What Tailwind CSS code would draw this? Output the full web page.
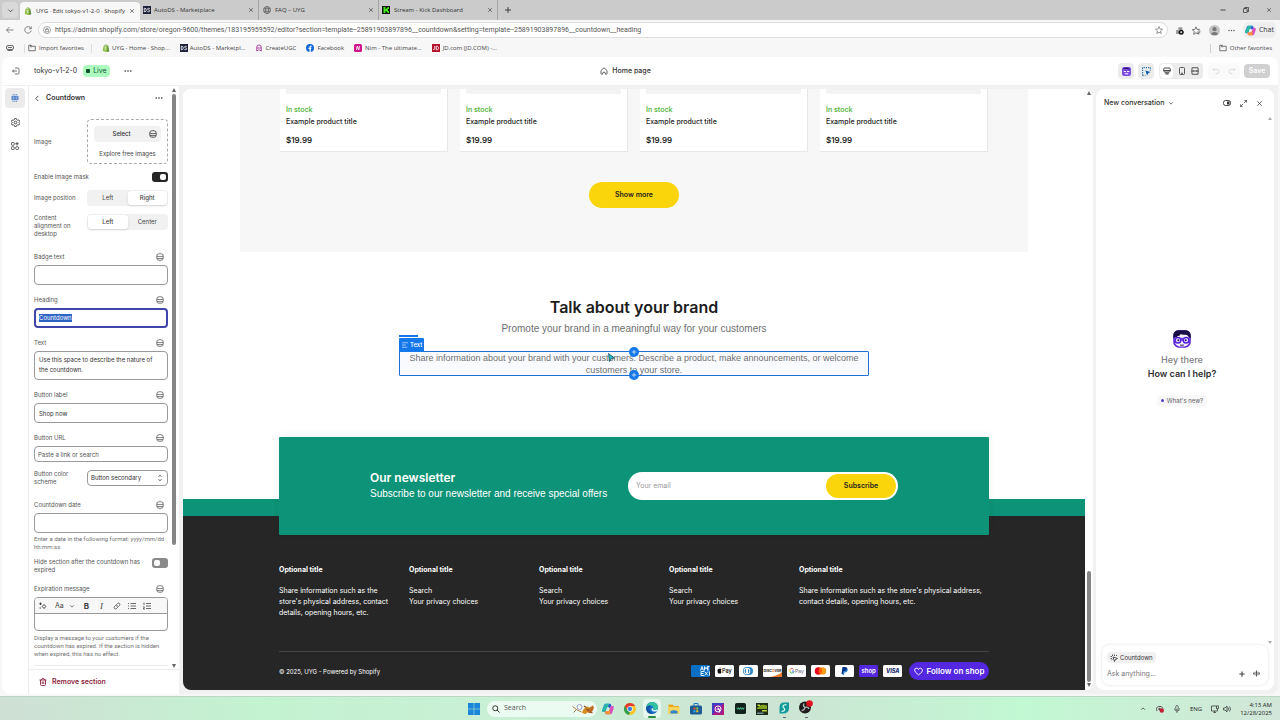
<!DOCTYPE html>
<html lang="en">
<head>
<meta charset="utf-8">
<meta name="viewport" content="width=device-width, initial-scale=1">
<title>UYG · Edit tokyo-v1-2-0 · Shopify</title>
<script src="https://cdn.jsdelivr.net/npm/@tailwindcss/browser@4"></script>
</head>
<body class="flex h-screen flex-col overflow-hidden bg-[#f7f7f7] font-['Inter',sans-serif] text-[#303030]">
<svg class="hidden" aria-hidden="true">
  <symbol id="x" viewBox="0 0 16 16"><path d="M3 3l10 10M13 3L3 13" fill="none" stroke="currentColor" stroke-width="1.6"/></symbol>
  <symbol id="down" viewBox="0 0 16 16"><path d="M3 6l5 5 5-5" fill="none" stroke="currentColor" stroke-width="1.8"/></symbol>
  <symbol id="dots" viewBox="0 0 16 16"><g fill="currentColor"><circle cx="2.5" cy="8" r="1.6"/><circle cx="8" cy="8" r="1.6"/><circle cx="13.5" cy="8" r="1.6"/></g></symbol>
  <symbol id="plus" viewBox="0 0 16 16"><path d="M8 2v12M2 8h12" fill="none" stroke="currentColor" stroke-width="1.8"/></symbol>
  <symbol id="db" viewBox="0 0 16 16"><g fill="none" stroke="currentColor" stroke-width="1.5"><rect x="1.500" y="1.500" width="13" height="13" rx="4.500"/><path d="M2 6.500q6 2 12 0M2 10.500q6 2 12 0"/></g></symbol>
  <symbol id="folder" viewBox="0 0 16 16"><path d="M1.5 13.5v-11h5l1.500 2h6.500v9zM5 2.500v3h3" fill="none" stroke="currentColor" stroke-width="1.4"/></symbol>
  <symbol id="bag" viewBox="0 0 16 16"><path d="M3 4l8-1.500 2.500 12-5 1.500L1.500 14z" fill="#8fbf45"/><path d="M11 2.500l1.500 1 2 11-4 1.500z" fill="#5a8a36"/><path d="M5.500 4.500c0-5 4-5 4-1" fill="none" stroke="#6d9d3c" stroke-width="1.200"/><path d="M9 6.500c-4-1.500-4 1.500-2 2.500s1.500 3-1.500 1.500" fill="none" stroke="#fff" stroke-width="1.400"/></symbol>
  <symbol id="ds" viewBox="0 0 16 16"><rect width="16" height="16" fill="#1c2038"/><path d="M2.500 4.500v7h1.500c3.500 0 3.500-7 0-7zM13.500 5c-3-1-5 0-4.500 1.500s4.500 1 4.500 3-3 2.500-5 1.500" fill="none" stroke="#fff" stroke-width="1.600"/></symbol>
  <symbol id="copilot" viewBox="0 0 16 16"><path d="M5 1h5c2 0 2 2 2.500 4H8C6.500 5 6 7 5.500 9L4.500 12H2C0 12 0 10 .8 7.500L2.500 3C3 1.500 4 1 5 1z" fill="#2a8fe6"/><path d="M5 1h5L8 5C6.500 5 6 7 5 10L2 12C0 12 0 10 .8 7.500z" fill="#27b8a0"/><path d="M11 15H6c-2 0-2-2-2.500-4H8c1.500 0 2-2 2.500-4l1-3H14c2 0 2 2 1.200 4.500L13.500 13c-.5 1.500-1.500 2-2.500 2z" fill="#d94fc0"/><path d="M11 15H6c-2 0-2-2-2.500-4H8c1.500 0 2-2 2.500-4z" fill="#f79436"/><path d="M10 1c2 0 2 2 2.500 3l-1 0-1 3L8 5z" fill="#3158d4"/></symbol>
  <symbol id="face" viewBox="0 0 32 32"><rect x="2" y="2" width="28" height="28" rx="9" fill="#5b25dd"/><rect x="4.500" y="8" width="23" height="20" rx="8" fill="#f4f0ff"/><path d="M2 15V11Q2 2 11 2h10q9 0 9 9v4l-3-2q-1-4-4-4-7 1-9-1-2 4-5 3l-2 3-2-1z" fill="#170c45"/><path d="M3 14h26v5H3z" fill="#7c4cf0"/><circle cx="9.500" cy="18" r="4.500" fill="#efe9ff" stroke="#5520dc" stroke-width="2.500"/><circle cx="22.500" cy="18" r="4.500" fill="#efe9ff" stroke="#5520dc" stroke-width="2.500"/><circle cx="10" cy="18" r="1.500" fill="#241052"/><circle cx="22" cy="18" r="1.500" fill="#241052"/><path d="M13 25.500q3 1 6 0" fill="none" stroke="#241052" stroke-width="1.600"/></symbol>
</svg>

<!-- Browser tabs -->
<header class="flex h-5 shrink-0 items-stretch bg-[#cbcbcb] font-['Open_Sans',sans-serif] text-[6px] text-[#333]">
  <button class="m-[2px] mr-0 flex w-4 items-center justify-center rounded bg-[#d9d9d9]" aria-label="Tab actions"><svg class="size-[7px]"><use href="#down"/></svg></button>
  <nav class="ml-0.5 flex" aria-label="Tabs">
    <div class="mt-0.5 flex w-[120px] items-center gap-1 rounded-t bg-[#f7f7f7] pr-[5px] pl-1"><svg class="size-2 shrink-0"><use href="#bag"/></svg><span class="grow whitespace-nowrap">UYG · Edit tokyo-v1-2-0 · Shopify</span><button aria-label="Close tab"><svg class="size-[6px]"><use href="#x"/></svg></button></div>
    <div class="flex w-[119px] items-center gap-[3px] border-r border-[#a5a5a5] pr-1 pl-[3px]"><svg class="size-2 shrink-0"><use href="#ds"/></svg><span class="grow whitespace-nowrap">AutoDS - Marketplace</span><button aria-label="Close tab"><svg class="size-[6px]"><use href="#x"/></svg></button></div>
    <div class="flex w-[120px] items-center gap-1 border-r border-[#a5a5a5] pr-1 pl-1"><svg class="size-2 shrink-0" viewBox="0 0 16 16" fill="none" stroke="#444" stroke-width="1.200"><circle cx="8" cy="8" r="7"/><ellipse cx="8" cy="8" rx="3" ry="7"/><path d="M1.500 5.500h13M1.500 10.500h13"/></svg><span class="grow whitespace-nowrap">FAQ – UYG</span><button aria-label="Close tab"><svg class="size-[6px]"><use href="#x"/></svg></button></div>
    <div class="flex w-[119px] items-center gap-1 border-r border-[#a5a5a5] pr-1 pl-[3px]"><svg class="size-2 shrink-0" viewBox="0 0 16 16"><rect width="16" height="16" fill="#111"/><path d="M3 2h4v4h2V4h2V2h3v4h-2v4h2v4h-3v-2H9v-2H7v4H3z" fill="#3fe719"/></svg><span class="grow whitespace-nowrap">Stream - Kick Dashboard</span><button aria-label="Close tab"><svg class="size-[6px]"><use href="#x"/></svg></button></div>
  </nav>
  <button class="ml-1.5 self-center" aria-label="New tab"><svg class="size-2"><use href="#plus"/></svg></button>
  <div class="ml-auto flex items-center gap-[17px] pr-2">
    <button aria-label="Minimize"><svg class="size-[6px]" viewBox="0 0 16 16"><path d="M1 8h14" stroke="#222" stroke-width="2"/></svg></button>
    <button aria-label="Restore"><svg class="size-[6px]" viewBox="0 0 16 16" fill="none" stroke="#222" stroke-width="2"><rect x="1" y="4" width="10" height="11" rx="2"/><path d="M5 4V1h8q2 0 2 2v9h-4"/></svg></button>
    <button aria-label="Close window"><svg class="size-[6px]"><use href="#x"/></svg></button>
  </div>
</header>

<!-- Address bar -->
<div class="flex h-5 shrink-0 items-center pr-1 pl-1.5 font-['Open_Sans',sans-serif] text-[#555]">
  <button aria-label="Back"><svg class="size-2" viewBox="0 0 16 16" fill="none" stroke="#555" stroke-width="1.400"><path d="M15 8H1M7 2L1 8l6 6"/></svg></button>
  <button class="ml-[10px]" aria-label="Reload"><svg class="size-2" viewBox="0 0 16 16" fill="none" stroke="#555" stroke-width="1.400"><path d="M14 5A6.500 6.500 0 1 0 14.500 9M14.500 1v4.500H10"/></svg></button>
  <div class="ml-1.5 flex h-4 grow items-center rounded-full border border-[#dedede] bg-white px-1">
    <svg class="size-2 shrink-0" viewBox="0 0 16 16" fill="none" stroke="#666" stroke-width="1.200"><circle cx="8" cy="8" r="7"/><path d="M5 7h6v4.500H5zM6 7V5.500q2-3 4 0V7"/></svg>
    <input aria-label="Address" class="ml-1 min-w-0 grow bg-transparent font-['Roboto',sans-serif] text-[7px] outline-none" value="https://admin.shopify.com/store/oregon-9600/themes/183195959592/editor?section=template--25891903897896__countdown&amp;setting=template--25891903897896__countdown__heading">
    <svg class="size-2 shrink-0" viewBox="0 0 16 16" fill="none" stroke="#555" stroke-width="1.200"><path d="M8 1l2 5 5 .5-4 3.500 1.500 5L8 12.500 3.500 15 5 10 1 6.500 6 6z"/></svg>
  </div>
  <div class="ml-[7px] flex items-center gap-2">
    <button aria-label="Extension"><svg class="size-[9px]" viewBox="0 0 16 16"><path d="M6 2h7v5H6zM2 7h5v7H2z" fill="#999"/><circle cx="11" cy="11" r="4.500" fill="#111"/><path d="M11 9v4M9 11h4" stroke="#fff" stroke-width="1.300"/></svg></button>
    <button aria-label="Favorites"><svg class="size-[9px]" viewBox="0 0 16 16" fill="none" stroke="#444" stroke-width="1.300"><path d="M10 10l2 4.500-5-2.500-4 3 1-5-3.500-3.500 4.500-.5L7 1.500 9 6h5M11 9h4M11.500 12h3"/></svg></button>
    <button aria-label="Profile"><svg class="size-[11px]" viewBox="0 0 16 16"><circle cx="8" cy="8" r="8" fill="#c4c4c4"/><circle cx="8" cy="6" r="3" fill="#777"/><path d="M3 13c1-4 9-4 10 0-2 2-8 2-10 0z" fill="#777"/></svg></button>
    <button aria-label="Settings and more"><svg class="size-[7px]"><use href="#dots"/></svg></button>
    <button class="flex h-4 items-center gap-[3px] rounded-md bg-[#eee] px-0.5 text-[7px] text-[#333]"><svg class="size-[11px]"><use href="#copilot"/></svg>Chat</button>
  </div>
</div>

<!-- Favorites bar -->
<nav class="flex h-[17px] shrink-0 items-center gap-[10px] px-1.5 pb-px font-['Open_Sans',sans-serif] text-[6px] text-[#444]" aria-label="Favorites">
  <button aria-label="Workspaces"><svg class="size-2" viewBox="0 0 16 16" fill="none" stroke="#444" stroke-width="1.600"><rect x="1" y="3" width="14" height="8" rx="3"/><path d="M4 7h8M3 13h10"/></svg></button>
  <a href="#" class="flex items-center gap-[3px] border-x border-[#ddd] pr-[7px]"><svg class="ml-[3px] size-2"><use href="#folder"/></svg>Import favorites</a>
  <a href="#" class="flex items-center gap-[2px]"><svg class="size-2"><use href="#bag"/></svg>UYG - Home · Shop...</a>
  <a href="#" class="flex items-center gap-[2px]"><svg class="size-2"><use href="#ds"/></svg>AutoDS - Marketpl...</a>
  <a href="#" class="flex items-center gap-[2px]"><svg class="size-2" viewBox="0 0 16 16" fill="none" stroke="#a5359a" stroke-width="1.800"><path d="M3.500 14V6q0-4 4.500-4t4.500 4v8l-3-2h-3zM4 8h8"/></svg>CreateUGC</a>
  <a href="#" class="flex items-center gap-[3px]"><svg class="size-2" viewBox="0 0 16 16"><circle cx="8" cy="8" r="8" fill="#1668d8"/><path d="M7 16V10H5V7.500h2V6q0-3 4-2.500V6q-2-.5-2 1v.5h2L10.500 10H9.500v6z" fill="#fff"/></svg>Facebook</a>
  <a href="#" class="flex items-center gap-[3px]"><svg class="size-2" viewBox="0 0 16 16"><rect width="16" height="16" rx="3" fill="#d3138e"/><path d="M5 12l1.500-8 3 8L11 4" fill="none" stroke="#fff" stroke-width="1.800"/></svg>Nim - The ultimate...</a>
  <a href="#" class="flex items-center gap-[3px]"><svg class="size-2" viewBox="0 0 16 16"><rect width="16" height="16" fill="#b5122c"/><path d="M5.500 4v6q-1 2-3 1M8.500 4.500v7h1.500c4 0 4-7 0-7z" fill="none" stroke="#fff" stroke-width="1.700"/></svg>JD.com (JD.COM) -...</a>
  <a href="#" class="ml-auto flex items-center gap-[3px] border-l border-[#ccc] pl-2 pr-[2px]"><svg class="size-2"><use href="#folder"/></svg>Other favorites</a>
</nav>

<!-- Theme editor -->
<div class="mx-0.5 mb-0.5 flex min-h-0 grow flex-col overflow-hidden rounded-lg bg-[#f1f1f1]">
  <div class="grid h-7 shrink-0 grid-cols-[19fr_auto_20fr] items-center bg-white pr-2 pl-2.5 text-[7px]">
    <div class="flex items-center">
      <button aria-label="Exit"><svg class="size-2" viewBox="0 0 16 16" fill="none" stroke="#444" stroke-width="1.500"><path d="M6 2h5q3 0 3 3v6q0 3-3 3H6M10 8H1M4 5L1 8l3 3"/></svg></button>
      <span class="ml-[14px]">tokyo-v1-2-0</span>
      <span class="ml-1.5 flex h-3 items-center gap-[3px] rounded bg-[#aefbc0] px-[3px] text-[#0d542b]"><i class="size-1 rounded-[1px] bg-[#0d542b]"></i>Live</span>
      <button class="ml-[14px]" aria-label="More actions"><svg class="size-2"><use href="#dots"/></svg></button>
    </div>
    <button class="flex items-center gap-1 font-medium"><svg class="size-2" viewBox="0 0 16 16" fill="none" stroke="#333" stroke-width="1.500"><path d="M2 7l6-5.500L14 7v6q0 1.500-1.500 1.500H11Q11 10 8 10t-3 4.500H3.500Q2 14.500 2 13z"/></svg>Home page</button>
    <div class="flex items-center justify-end gap-1">
      <button class="flex size-4 items-center justify-center rounded bg-[#ececec]" aria-label="Sidekick"><svg class="size-[9px]" viewBox="0 0 16 16"><rect width="16" height="16" rx="4" fill="#7c4be0"/><path d="M2 3q6-3 12 1" stroke="#3b1d96" stroke-width="2"/><path d="M3 7h4v2H3zM9 7h4v2H9zM5 11h6v2H5z" fill="#fff"/></svg></button>
      <button class="mr-px flex size-4 items-center justify-center rounded bg-[#ececec]" aria-label="Inspector"><svg class="size-[9px]" viewBox="0 0 16 16"><path d="M1 15V1h14v5M1 15h5" fill="none" stroke="#1b6ba8" stroke-width="2" stroke-dasharray="2 2"/><path d="M6 6l9 3-4 2-2 4z" fill="#0b5cad"/></svg></button>
      <div class="mr-px flex h-4 w-[44px] items-center justify-between rounded bg-[#ececec] pr-1 pl-px">
        <button class="flex h-[14px] w-[13px] items-center justify-center rounded bg-white" aria-label="Desktop"><svg class="size-2" viewBox="0 0 16 16" fill="none" stroke="#333" stroke-width="1.800"><rect x="1.500" y="2" width="13" height="8" rx="2"/><path d="M2 7h12M6 10v4M10 10v4M5 14h6"/></svg></button>
        <button aria-label="Mobile"><svg class="size-2" viewBox="0 0 16 16" fill="none" stroke="#444" stroke-width="1.800"><rect x="3" y="1" width="10" height="14" rx="2"/><path d="M6 12.500h4"/></svg></button>
        <button aria-label="Fullscreen"><svg class="size-2" viewBox="0 0 16 16" fill="none" stroke="#444" stroke-width="1.800"><path d="M2 5V1.500h12V5M2 11v3.500h12V11M1.500 5v6M14.500 5v6M3 8h10M5 6L3 8l2 2M11 6l2 2-2 2"/></svg></button>
      </div>
      <div class="flex h-4 w-8 items-center justify-around rounded bg-[#fafafa] text-[#d5d5d5]">
        <button aria-label="Undo"><svg class="size-2" viewBox="0 0 16 16" fill="none" stroke="currentColor" stroke-width="1.600"><path d="M5 2L2 5l3 3M2 5h8q4 0 4 4t-4 4H7"/></svg></button>
        <button aria-label="Redo"><svg class="size-2" viewBox="0 0 16 16" fill="none" stroke="currentColor" stroke-width="1.600"><path d="M11 2l3 3-3 3M14 5H6q-4 0-4 4t4 4h3"/></svg></button>
      </div>
      <button class="h-[14px] w-[26px] rounded bg-[#d0d0d0] font-semibold text-white">Save</button>
    </div>
  </div>

  <div class="flex min-h-0 grow">
    <!-- Rail -->
    <nav class="mt-px flex w-[27px] shrink-0 flex-col items-center gap-1 border-r border-[#ebebeb] bg-white pt-[2px]" aria-label="Editor">
      <button class="flex size-5 items-center justify-center rounded bg-[#ebebeb]" aria-label="Sections"><svg class="size-2" viewBox="0 0 16 16"><path d="M3 1h10M3 15h10" stroke="#4a7fc4" stroke-width="1.600" stroke-dasharray="2 1.500"/><rect x="1" y="3.500" width="14" height="9" rx="2" fill="#5584c8"/><path d="M1 8h14M5 4v8M11 4v8" stroke="#9dbbe5"/></svg></button>
      <button class="flex size-5 items-center justify-center" aria-label="Theme settings"><svg class="size-[9px]" viewBox="0 0 16 16" fill="none" stroke="#444" stroke-width="1.600"><path d="M6.500 1h3l.5 2 2 1 2-.5 1.500 2.500L14 8l1.500 2-1.500 2.500-2-.5-2 1-.5 2h-3L6 13l-2-1-2 .5L.5 10 2 8 .5 6 2 3.500 4 4l2-1z"/><circle cx="8" cy="8" r="2.300"/></svg></button>
      <button class="flex size-5 items-center justify-center" aria-label="App embeds"><svg class="size-2" viewBox="0 0 16 16" fill="none" stroke="#444" stroke-width="1.800"><rect x="1" y="1" width="5.500" height="5.500" rx="1.500"/><rect x="1" y="9.500" width="5.500" height="5.500" rx="1.500"/><rect x="9.500" y="9.500" width="5.500" height="5.500" rx="1.500"/><path d="M12 0v7M8.500 3.500h7"/></svg></button>
    </nav>

    <!-- Section settings -->
    <aside class="mt-px flex w-[150px] shrink-0 flex-col bg-white">
      <div class="flex min-h-0 grow">
        <div class="flex min-w-0 grow flex-col overflow-hidden pl-[5px]">
          <div class="flex h-6 shrink-0 items-center pr-[7px]">
            <button aria-label="Back"><svg class="size-[7px]" viewBox="0 0 16 16" fill="none" stroke="#333" stroke-width="2"><path d="M10 2L4 8l6 6"/></svg></button>
            <h2 class="ml-[5px] text-[7px] font-semibold">Countdown</h2>
            <button class="ml-auto" aria-label="Section actions"><svg class="size-2"><use href="#dots"/></svg></button>
          </div>
          <form class="flex flex-col gap-[7px] pt-[9px] pr-[2px] text-[6px] leading-[8px] text-[#555]">
            <div class="flex items-center justify-between"><span>Image</span>
              <div class="flex h-[45px] w-[81px] flex-col justify-center gap-2 rounded border border-dashed border-[#aaa] px-1.5">
                <div class="flex h-4 items-center rounded bg-[#f1f1f1] pr-1 text-[#303030]"><button type="button" class="grow font-medium">Select</button><button type="button" aria-label="Connect dynamic source"><svg class="size-2"><use href="#db"/></svg></button></div>
                <button type="button" class="text-[#444]">Explore free images</button>
              </div>
            </div>
            <label class="mt-px flex h-[10px] items-center justify-between">Enable image mask
              <input type="checkbox" checked class="h-[10px] w-4 appearance-none rounded-[3px] bg-[#262626] before:mt-[2px] before:ml-2 before:block before:size-1.5 before:rounded-[2px] before:bg-white"></label>
            <div class="mt-px flex h-4 items-center justify-between"><span>Image position</span>
              <div class="flex h-4 w-[81px] rounded bg-[#f1f1f1] p-px text-[#444]"><button type="button" class="w-1/2">Left</button><button type="button" class="w-1/2 rounded-[3px] bg-white font-medium shadow-sm">Right</button></div></div>
            <div class="mt-px flex justify-between"><span class="w-[46px]">Content alignment on desktop</span>
              <div class="flex h-4 w-[81px] rounded bg-[#f1f1f1] p-px text-[#444]"><button type="button" class="w-1/2 rounded-[3px] bg-white font-medium shadow-sm">Left</button><button type="button" class="w-1/2">Center</button></div></div>
            <div class="mt-1"><div class="flex h-4 items-center justify-between pr-1"><label for="badge">Badge text</label><svg class="size-2"><use href="#db"/></svg></div>
              <input id="badge" class="block h-5 w-full rounded border border-[#999] px-1"></div>
            <div><div class="flex h-4 items-center justify-between pr-1"><label for="heading">Heading</label><svg class="size-2"><use href="#db"/></svg></div>
              <div class="relative flex h-5 items-center rounded border-2 border-[#4144a8] px-[3px]"><span class="bg-[#2c63c5] text-transparent" aria-hidden="true">Countdown</span><input id="heading" value="Countdown" class="absolute inset-0 px-[3px] text-white outline-none"></div></div>
            <div><div class="flex h-4 items-center justify-between pr-1"><label for="text">Text</label><svg class="size-2"><use href="#db"/></svg></div>
              <textarea id="text" class="block h-[29px] w-full resize-none overflow-hidden rounded border border-[#999] px-1 py-[3px] leading-[10px] text-[#303030]">Use this space to describe the nature of the countdown.</textarea></div>
            <div><div class="flex h-4 items-center justify-between pr-1"><label for="blabel">Button label</label><svg class="size-2"><use href="#db"/></svg></div>
              <input id="blabel" value="Shop now" class="block h-5 w-full rounded border border-[#999] px-1 text-[#303030]"></div>
            <div><div class="flex h-4 items-center justify-between pr-1"><label for="url">Button URL</label><svg class="size-2"><use href="#db"/></svg></div>
              <input id="url" placeholder="Paste a link or search" class="block h-4 w-full rounded border border-[#999] px-[3px] placeholder:text-[#555]"></div>
            <div class="mt-px flex items-center justify-between"><label for="scheme" class="w-[46px]">Button color scheme</label>
              <div class="flex h-4 w-[81px] items-center rounded border border-[#999] pr-[3px]"><select id="scheme" class="min-w-0 grow appearance-none pl-[3px] text-[#303030]"><option>Button secondary</option></select><svg class="size-2 shrink-0" viewBox="0 0 16 16" fill="none" stroke="#555" stroke-width="1.500"><path d="M5 6l3-4 3 4M5 10l3 4 3-4"/></svg></div></div>
            <div class="mt-1"><div class="flex h-4 items-center justify-between pr-1"><label for="date">Countdown date</label><svg class="size-2"><use href="#db"/></svg></div>
              <input id="date" class="block h-5 w-full rounded border border-[#999] px-1">
              <p class="mt-0.5 font-['Roboto',sans-serif] whitespace-nowrap text-[#707070]">Enter a date in the following format: yyyy/mm/dd<br>hh:mm:ss</p></div>
            <label class="flex items-start justify-between"><span class="w-[112px]">Hide section after the countdown has expired</span>
              <input type="checkbox" class="h-[10px] w-4 appearance-none rounded-[3px] bg-[#8a8a8a] before:mt-[2px] before:ml-[2px] before:block before:size-1.5 before:rounded-[2px] before:bg-white"></label>
            <div><div class="flex h-4 items-center justify-between pr-1"><label for="exp">Expiration message</label><svg class="size-2"><use href="#db"/></svg></div>
              <div class="h-[34px] overflow-hidden rounded border border-[#999]">
                <div class="flex h-4 items-center border-b border-[#999] bg-[#f7f7f7] pl-1 text-[#444]">
                  <button type="button" aria-label="Generate text"><svg class="size-2" viewBox="0 0 16 16" fill="none" stroke="#333" stroke-width="1.800"><path d="M10 5l3.500 4L10 13 6.500 9zM3 1v5M.5 3.500h5M1 12h3"/></svg></button>
                  <button type="button" class="ml-2 flex items-center gap-[5px] text-[7px]">Aa<svg class="size-[6px]"><use href="#down"/></svg></button>
                  <button type="button" class="ml-[9px] text-[8px] font-bold" aria-label="Bold">B</button>
                  <button type="button" class="ml-[11px] font-['Liberation_Serif',serif] text-[9px] italic" aria-label="Italic">I</button>
                  <button type="button" class="ml-2.5" aria-label="Link"><svg class="size-2" viewBox="0 0 16 16" fill="none" stroke="#444" stroke-width="1.600"><path d="M7 5l2-2q2.500-2 4 0t0 4L11 9Q9 11 7 9M9 11l-2 2q-2.500 2-4 0t0-4l2-2q2-2 4 0"/></svg></button>
                  <button type="button" class="ml-[7px]" aria-label="Bulleted list"><svg class="size-2" viewBox="0 0 16 16" stroke="#444" stroke-width="1.600"><path d="M5 3h11M5 8h11M5 13h11M0 3h2M0 8h2M0 13h2"/></svg></button>
                  <button type="button" class="ml-[7px]" aria-label="Numbered list"><svg class="size-2" viewBox="0 0 16 16" fill="none" stroke="#444" stroke-width="1.600"><path d="M6 3h10M6 8h10M6 13h10M2 1v5M.5 10q2-2 2.500 0L.5 14H4"/></svg></button>
                </div>
                <input id="exp" class="block h-4 w-full px-1">
              </div>
              <p class="mt-[3px] font-['Roboto',sans-serif] whitespace-nowrap text-[#707070]">Display a message to your customers if the<br>countdown has expired. If the section is hidden<br>when expired, this has no effect.</p></div>
            <hr class="border-[#ebebeb]">
          </form>
        </div>
        <div class="flex w-[9px] shrink-0 flex-col items-center pt-[2px] pr-px pb-px">
          <i class="border-x-2 border-b-4 border-x-transparent border-b-[#666]"></i>
          <i class="mt-[2px] h-[451px] w-1 rounded-full bg-[#858585]"></i>
          <i class="mt-auto border-x-2 border-t-4 border-x-transparent border-t-[#666]"></i>
        </div>
      </div>
      <div class="h-[25px] shrink-0 border-t border-[#ebebeb] pl-[10px]"><button class="flex h-full items-center gap-[5px] text-[7px] font-semibold text-[#8e1f3c]"><svg class="size-2" viewBox="0 0 16 16" fill="none" stroke="currentColor" stroke-width="1.800"><path d="M1 4h14M5 4q0-3 3-3t3 3M3 4v9q0 2 2 2h6q2 0 2-2V4M6.500 7v5M9.500 7v5"/></svg>Remove section</button></div>
    </aside>

    <!-- Storefront preview -->
    <main class="mt-1 mb-1 ml-1 flex min-w-0 grow overflow-hidden rounded-lg bg-white text-[7px]">
      <div class="flex min-w-0 grow flex-col bg-white text-[#1d1d1d]">
        <section class="mx-[57px] h-[163px] shrink-0 bg-[#f7f7f7] px-10 text-center">
          <div class="grid grid-cols-4 gap-3 text-left font-medium">
            <article class="h-[63px] border-r border-b border-[#e8e8e8] bg-white px-1.5"><div class="h-[5px] bg-[#f3f3f3]"></div><p class="mt-2.5 leading-[12px] font-semibold text-[#5bb946]">In stock</p><h3 class="leading-[12px]">Example product title</h3><p class="mt-1 text-[8px] leading-[16px] font-semibold">$19.99</p></article>
            <article class="h-[63px] border-r border-b border-[#e8e8e8] bg-white px-1.5"><div class="h-[5px] bg-[#f3f3f3]"></div><p class="mt-2.5 leading-[12px] font-semibold text-[#5bb946]">In stock</p><h3 class="leading-[12px]">Example product title</h3><p class="mt-1 text-[8px] leading-[16px] font-semibold">$19.99</p></article>
            <article class="h-[63px] border-r border-b border-[#e8e8e8] bg-white px-1.5"><div class="h-[5px] bg-[#f3f3f3]"></div><p class="mt-2.5 leading-[12px] font-semibold text-[#5bb946]">In stock</p><h3 class="leading-[12px]">Example product title</h3><p class="mt-1 text-[8px] leading-[16px] font-semibold">$19.99</p></article>
            <article class="h-[63px] border-r border-b border-[#e8e8e8] bg-white px-1.5"><div class="h-[5px] bg-[#f3f3f3]"></div><p class="mt-2.5 leading-[12px] font-semibold text-[#5bb946]">In stock</p><h3 class="leading-[12px]">Example product title</h3><p class="mt-1 text-[8px] leading-[16px] font-semibold">$19.99</p></article>
          </div>
          <button class="mt-[30px] h-[26px] w-[90px] rounded-full bg-[#fad50c] text-[7px] font-semibold">Show more</button>
        </section>

        <section class="flex h-[185px] shrink-0 flex-col items-center pt-[44px]">
          <h1 class="text-[16px] leading-[22px] font-semibold">Talk about your brand</h1>
          <p class="font-['Liberation_Sans',sans-serif] text-[10px] leading-[22px] text-[#707070]">Promote your brand in a meaningful way for your customers</p>
          <div class="relative mt-[11px] h-[25px] w-[470px] rounded-[1px] border border-[#1f6fd6] bg-[#f9fafd] text-center font-['Liberation_Sans',sans-serif] text-[9px] leading-[12px] text-[#707070]">
            <p>Share information about your brand with your customers. Describe a product, make announcements, or welcome customers to your store.</p>
            <span class="absolute -top-[17px] -left-px h-[2px] w-[19px] bg-[#1477ea]"></span>
            <span class="absolute -top-[14px] -left-px flex h-[14px] w-[25px] items-center gap-[2px] rounded-t-[1px] bg-[#1477ea] pl-[3px] font-['Inter',sans-serif] text-[6px] font-medium text-white"><svg class="size-[6px]" viewBox="0 0 16 16" stroke="#fff" stroke-width="1.500"><path d="M0 2h16M0 8h10M0 14h14"/></svg>Text</span>
            <button class="absolute -top-[5px] left-1/2 -ml-[5px] flex size-[10px] items-center justify-center rounded-full bg-[#1477ea] text-white" aria-label="Add block above"><svg class="size-[6px]"><use href="#plus"/></svg></button>
            <button class="absolute -bottom-[5px] left-1/2 -ml-[5px] flex size-[10px] items-center justify-center rounded-full bg-[#1477ea] text-white" aria-label="Add block below"><svg class="size-[6px]"><use href="#plus"/></svg></button>
            <svg class="absolute top-px left-[208px] h-[9px] w-[7px]" viewBox="0 0 14 18"><path d="M1 1l12 9-6 1-4 6z" fill="#28b5c4" stroke="#174f58" stroke-width="1.500"/></svg>
          </div>
        </section>

        <footer class="flex grow flex-col bg-[#262626] text-white">
          <div class="bg-[linear-gradient(to_bottom,#fff_62px,#0d9377_62px,#0d9377_79px,#262626_79px)] px-24">
            <form class="flex h-[98px] items-center justify-between rounded-[1px] bg-[#0d9377] px-[91px] shadow-[0_-2px_8px_rgba(0,0,0,0.06)]">
              <div><h2 class="text-[12px] leading-[16px] font-semibold">Our newsletter</h2><p class="font-['Liberation_Sans',sans-serif] text-[10px] leading-[16px] whitespace-nowrap">Subscribe to our newsletter and receive special offers</p></div>
              <div class="flex h-7 w-[270px] rounded-full bg-white p-[2px] pl-2"><input type="email" aria-label="Your email" placeholder="Your email" class="min-w-0 grow text-[7px] text-black placeholder:text-[#999]"><button type="button" class="w-[70px] rounded-full bg-[#fad50c] text-[7px] font-semibold text-[#1d1d1d]">Subscribe</button></div>
            </form>
          </div>
          <div class="mx-24 grid grow grid-cols-[130px_130px_130px_130px_1fr] border-b border-[#444] pt-[29px] leading-[11px]">
            <div><h3 class="leading-[12px] font-bold">Optional title</h3><p class="mt-[9px] whitespace-nowrap">Share information such as the<br>store's physical address, contact<br>details, opening hours, etc.</p></div>
            <div><h3 class="leading-[12px] font-bold">Optional title</h3><div class="mt-[9px] flex flex-col"><a href="#">Search</a><a href="#">Your privacy choices</a></div></div>
            <div><h3 class="leading-[12px] font-bold">Optional title</h3><div class="mt-[9px] flex flex-col"><a href="#">Search</a><a href="#">Your privacy choices</a></div></div>
            <div><h3 class="leading-[12px] font-bold">Optional title</h3><div class="mt-[9px] flex flex-col"><a href="#">Search</a><a href="#">Your privacy choices</a></div></div>
            <div><h3 class="leading-[12px] font-bold">Optional title</h3><p class="mt-[9px] whitespace-nowrap">Share information such as the store's physical address,<br>contact details, opening hours, etc.</p></div>
          </div>
          <div class="mx-24 flex h-[38px] shrink-0 items-center gap-[5px]">
            <p class="mr-auto text-[6px]">© 2025, UYG - Powered by Shopify</p>
            <svg class="h-3 w-[19px]" viewBox="0 0 38 24" role="img" aria-label="American Express"><rect width="38" height="24" rx="3" fill="#0b6fc6"/><g fill="none" stroke="#e3f2fd" stroke-width="2"><path d="M19 11l3-8 3 8M20 8h4M27 11V3l3 5 3-5v8M37 3h-3v8M20 21v-8h6M20 17h5M20 21h6M27 13l7 8M34 13l-7 8M37 13v8"/></g></svg>
            <svg class="h-3 w-[19px]" viewBox="0 0 38 24" role="img" aria-label="Apple Pay"><rect width="38" height="24" rx="3" fill="#fff"/><path d="M9 8c3-1 4 0 4 1-2 1-1 4 0 5-2 5-3 3-4 3s-4 1-4-5c0-3 2-5 4-4zM9 7q0-2 2-3 0 2-2 3z" fill="#111"/><text x="14" y="16" font-family="Inter" font-size="11" font-weight="500">Pay</text></svg>
            <svg class="h-3 w-[19px]" viewBox="0 0 38 24" role="img" aria-label="Diners Club"><rect width="38" height="24" rx="3" fill="#fff"/><path d="M14 4h6a8 8 0 0 1 0 16h-6z" fill="#3086c8"/><circle cx="16" cy="12" r="8" fill="#3086c8"/><circle cx="16" cy="12" r="6.500" fill="#fff"/><path d="M14 7.500v9a5 5 0 0 1 0-9zM18 7.500v9a5 5 0 0 0 0-9z" fill="#3086c8"/></svg>
            <svg class="h-3 w-[19px]" viewBox="0 0 38 24" role="img" aria-label="Discover"><rect width="38" height="24" rx="3" fill="#fff"/><path d="M38 14v7q0 3-3 3H14q16-3 24-10z" fill="#e9782a"/><text x="1" y="13" font-family="Inter" font-size="7" font-weight="700" fill="#222">DISC<tspan fill="#e9782a">O</tspan>VER</text></svg>
            <svg class="h-3 w-[19px]" viewBox="0 0 38 24" role="img" aria-label="Google Pay"><rect width="38" height="24" rx="3" fill="#fff"/><g fill="none" stroke-width="2"><path d="M13 9a4 4 0 0 0-7 0" stroke="#ea4335"/><path d="M6 9q-1 3 0 5" stroke="#fbbc04"/><path d="M6 14q3 4 7 1" stroke="#34a853"/><path d="M13 15q1-1 1-3h-4" stroke="#4285f4"/></g><text x="16" y="16" font-family="Inter" font-size="10" fill="#5f6368">Pay</text></svg>
            <svg class="h-3 w-[19px]" viewBox="0 0 38 24" role="img" aria-label="Mastercard"><rect width="38" height="24" rx="3" fill="#fff"/><circle cx="15" cy="12" r="7.500" fill="#eb001b"/><circle cx="23" cy="12" r="7.500" fill="#f79e1b"/><path d="M19 5.700a7.500 7.500 0 0 1 0 12.600 7.500 7.500 0 0 1 0-12.600z" fill="#ff5f00"/></svg>
            <svg class="h-3 w-[19px]" viewBox="0 0 38 24" role="img" aria-label="PayPal"><rect width="38" height="24" rx="3" fill="#fff"/><path d="M15 4h6q5 1 3 6-1 3-6 3l-1 5h-4z" fill="#003087"/><path d="M24 7q3 2 1 5t-6 3l-1 5h-3l2-8q6 1 7-5z" fill="#3086c8"/></svg>
            <svg class="h-3 w-[19px]" viewBox="0 0 38 24" role="img" aria-label="Shop Pay"><rect width="38" height="24" rx="3" fill="#5427e0"/><text x="5" y="16" font-family="Inter" font-size="12" font-weight="600" fill="#fff">shop</text></svg>
            <svg class="h-3 w-[19px]" viewBox="0 0 38 24" role="img" aria-label="Visa"><rect width="38" height="24" rx="3" fill="#fff"/><text x="6" y="16" font-family="Inter" font-size="11" font-weight="800" font-style="italic" fill="#1a2b75">VISA</text></svg>
            <button class="ml-[2px] flex h-[18px] w-20 items-center justify-center gap-1 rounded-full bg-[#5427e0] text-[8px] font-semibold"><svg class="size-[9px] shrink-0" viewBox="0 0 16 16" fill="none" stroke="#fff" stroke-width="1.600"><path d="M8 14Q1 9 1 5.500T4.500 2Q7 2 8 4.500 9 2 11.500 2T15 5.500 8 14z"/></svg><span class="whitespace-nowrap">Follow on shop</span></button>
          </div>
        </footer>
      </div>
      <div class="flex w-2 shrink-0 flex-col items-center bg-white pt-[2px] pr-px pb-[3px]">
        <i class="border-x-2 border-b-4 border-x-transparent border-b-[#666]"></i>
        <i class="mt-auto mb-px h-[111px] w-1 rounded-full bg-[#858585]"></i>
        <i class="border-x-2 border-t-4 border-x-transparent border-t-[#666]"></i>
      </div>
    </main>

    <!-- Assistant -->
    <aside class="my-1 mr-1 ml-[3px] flex w-[178px] shrink-0 flex-col rounded-lg bg-white">
      <div class="flex h-7 shrink-0 items-center px-2 text-[7px] font-medium">
        <button class="flex items-center gap-1">New conversation<svg class="size-[6px]"><use href="#down"/></svg></button>
        <div class="ml-auto flex items-center gap-[9px] pr-[3px]">
          <button aria-label="Dock"><svg class="size-2" viewBox="0 0 16 16"><rect x="1" y="3" width="14" height="10" rx="4" fill="none" stroke="#333" stroke-width="1.800"/><path d="M8 5h4q1 0 1 1v4q0 1-1 1H8z" fill="#333"/></svg></button>
          <button aria-label="Expand"><svg class="size-[7px]" viewBox="0 0 16 16" fill="none" stroke="#333" stroke-width="1.600"><path d="M9 7l6-6M10 1h5v5M7 9l-6 6M6 15H1v-5"/></svg></button>
          <button aria-label="Close"><svg class="size-[7px]"><use href="#x"/></svg></button>
        </div>
      </div>
      <div class="flex min-h-0 grow">
        <div class="flex grow flex-col items-center justify-center pb-[27px] text-[9px] leading-[14px]">
          <svg class="mb-1 size-5"><use href="#face"/></svg>
          <p class="font-medium text-[#808080]">Hey there</p>
          <p class="font-semibold">How can I help?</p>
          <button class="mt-[14px] flex h-3 items-center gap-[3px] rounded bg-[#f8f8f8] px-1 text-[6px] text-[#616161]"><i class="size-[3px] rounded-full bg-[#5340c8]"></i>What's new?</button>
        </div>
        <div class="flex w-[6px] shrink-0 flex-col items-start justify-between pb-px">
          <i class="border-x-2 border-b-3 border-x-transparent border-b-[#aaa]"></i>
          <i class="border-x-2 border-t-3 border-x-transparent border-t-[#aaa]"></i>
        </div>
      </div>
      <div class="mx-1.5 mb-[5px] flex h-10 shrink-0 flex-col justify-between rounded-lg px-[5px] pt-[7px] pb-1.5 shadow-[0_0_3px_rgba(0,0,0,0.14)]">
        <span class="flex h-[11px] items-center gap-[2px] self-start rounded bg-[#f1f1f1] px-[3px] text-[6px]"><svg class="size-2" viewBox="0 0 16 16" fill="none" stroke="#333" stroke-width="1.600"><path d="M1 5h3M5 1v3M9 1v3M1 9h3M6 6l9 3-4 2-2 4zM3 12l2-1M12 4l2-2"/></svg>Countdown</span>
        <div class="flex items-center gap-2 text-[7px]"><input aria-label="Ask anything" placeholder="Ask anything..." class="min-w-0 grow outline-none placeholder:text-[#777]"><button aria-label="Add"><svg class="size-[6px]" viewBox="0 0 16 16" stroke="#444" stroke-width="3"><path d="M8 1v14M1 8h14"/></svg></button><button class="pr-[3px]" aria-label="Voice"><svg class="size-[7px]" viewBox="0 0 16 16" stroke="#444" stroke-width="2"><path d="M1 6v4M4.500 4v8M8 1v14M11.500 4v8M15 6v4"/></svg></button></div>
      </div>
    </aside>
  </div>
</div>

<!-- Taskbar -->
<footer class="grid h-6 shrink-0 grid-cols-[1fr_auto_1fr] items-center border-t border-[#bcd6c4] bg-[linear-gradient(90deg,#cfdfd4_0%,#c3f3d1_20%,#cbeed6_45%,#cde3d4_60%,#c2f8d3_80%,#d2e6d8_100%)] font-['Open_Sans',sans-serif]">
  <div></div>
  <div class="flex items-center">
    <button class="flex w-[22px] justify-center" aria-label="Start"><svg class="size-3" viewBox="0 0 24 24"><path d="M0 0h11.500v11.500H0zM12.500 0H24v11.500H12.500zM0 12.500h11.500V24H0zM12.500 12.500H24V24H12.500z" fill="#1a87d8"/></svg></button>
    <label class="ml-[2px] flex h-4 w-[110px] items-center gap-1 rounded-full bg-[#ecfbf1] pr-[2px] pl-[5px]"><svg class="size-2 shrink-0" viewBox="0 0 16 16" fill="none" stroke="#222" stroke-width="1.800"><circle cx="6.500" cy="6.500" r="5"/><path d="M10 10l5 5"/></svg><input aria-label="Search" placeholder="Search" class="min-w-0 grow bg-transparent text-[7px] placeholder:text-[#555]"><svg class="h-3 w-6 shrink-0" viewBox="0 0 48 24"><circle cx="17" cy="8" r="5" fill="#fff" stroke="#7b86b5" stroke-width="1.500"/><path d="M3 7l8 6-6 6M11 13l10 5" fill="none" stroke="#b97f4e" stroke-width="2"/><path d="M22 19q4-11 12-12 6 4 0 11t-12 1z" fill="#d88c26"/><path d="M32 16q4-8 12-11 4 5-2 12t-10-1z" fill="#c06b22"/><path d="M26 6l5 3M38 18l5 2M30 12l6 3" stroke="#8b4c1d" stroke-width="2.500"/></svg></label>
    <button class="flex w-[22px] justify-center" aria-label="Copilot"><svg class="size-3"><use href="#copilot"/></svg></button>
    <button class="flex w-[22px] justify-center" aria-label="Chrome"><svg class="size-3" viewBox="0 0 24 24"><circle cx="12" cy="12" r="12" fill="#f9c52b"/><path d="M1.600 6A12 12 0 0 1 22.400 6H12L7 15z" fill="#e03c30"/><path d="M1.600 6l5.200 9L12 18l-2 6A12 12 0 0 1 1.600 6z" fill="#2da04e"/><circle cx="12" cy="12" r="5.500" fill="#fff"/><circle cx="12" cy="12" r="4.300" fill="#3c7de8"/></svg></button>
    <button class="mx-[2px] flex h-[19px] w-[18px] flex-col items-center justify-between rounded bg-[#e4f7ea] pt-[3px]" aria-label="Edge"><svg class="size-3" viewBox="0 0 24 24"><circle cx="12" cy="12" r="12" fill="#1673c8"/><path d="M1 9Q4 0 12 0q11 0 12 10 0 6-6 6-5 0-3-4Q14 6 8 7 4 7 1 11z" fill="#35c2a0"/><path d="M1 10q4-5 10-2-6 2-4 8 3 6 9 6-15 5-16-10z" fill="#1454a4"/><path d="M15 12q-3 4 3 4 3 0 6-2l-2 4q-8 3-11-2-1-4 4-4z" fill="#d9f3f3"/></svg><i class="h-[2px] w-2 rounded bg-[#2d8a45]"></i></button>
    <button class="flex w-[22px] justify-center" aria-label="File Explorer"><svg class="size-3" viewBox="0 0 24 24"><path d="M1 3h8l3 3h10v15H1z" fill="#e9a91f"/><path d="M1 8h22v13H1z" fill="#fbd45c"/><path d="M5 21v-5q7-3 14 0v5z" fill="#2d86cf"/></svg></button>
    <button class="flex w-[22px] justify-center" aria-label="Store"><svg class="size-3" viewBox="0 0 24 24"><path d="M8 6V1h8v5" fill="none" stroke="#1b77b9" stroke-width="2"/><rect y="5" width="24" height="18" rx="3" fill="#1c5d97"/><path d="M7 9h4v4H7z" fill="#f0532a"/><path d="M12.500 9h4v4h-4z" fill="#8dc63f"/><path d="M7 14.500h4v4H7z" fill="#28a8ea"/><path d="M12.500 14.500h4v4h-4z" fill="#fdb913"/></svg></button>
    <button class="flex w-[22px] justify-center" aria-label="Recorder"><svg class="size-3" viewBox="0 0 24 24"><rect width="24" height="24" fill="#b01a7c"/><path d="M0 0h24L0 24z" fill="#3d3fc4"/><path d="M4 4h16v16H4z" fill="#8a1fa8"/><circle cx="12" cy="12" r="6" fill="none" stroke="#fff" stroke-width="2"/><path d="M12 9l3 4v6M9 14q3-5 5 0" fill="none" stroke="#fff" stroke-width="2"/></svg></button>
    <button class="flex w-[22px] justify-center" aria-label="Wave"><svg class="size-[11px]" viewBox="0 0 24 24"><rect width="24" height="24" rx="4" fill="#10211b"/><path d="M4 10l2 4 2-4 2 4 2-4 2 4 2-4 2 4 2-4" fill="none" stroke="#45d39a" stroke-width="1.800"/></svg></button>
    <button class="flex w-[22px] justify-center" aria-label="Game"><svg class="size-3" viewBox="0 0 24 24"><rect width="24" height="24" fill="#202b17"/><path d="M1 12Q8 0 22 5v7z" fill="#7da31f"/><path d="M3 3h5v3H3zM12 14h10v3H12z" fill="#bdd83f"/><path d="M2 19h13v3H2z" fill="#6c8b9a"/></svg></button>
    <button class="flex h-[19px] w-[22px] flex-col items-center justify-between pt-[3px]" aria-label="Surfshark"><svg class="size-3" viewBox="0 0 24 24"><path d="M12 1h10v12q-1 10-12 10H3V11Q3 1 12 1z" fill="#159a9a"/><path d="M17 5q-7 0-7 4 0 3 3 4 2 5-6 6" fill="none" stroke="#d9f6ef" stroke-width="2.500"/></svg><i class="h-px w-[3px] bg-[#667]"></i></button>
    <button class="flex h-[19px] w-[22px] flex-col items-center justify-between pt-px" aria-label="OBS Studio"><svg class="size-[14px]" viewBox="0 0 28 28"><circle cx="12" cy="15" r="12" fill="#1d1d1d"/><path d="M12 15q-5-3-2-8M12 15q6-2 8 3M12 15q-1 6-7 6" fill="none" stroke="#bbb" stroke-width="2.500"/><circle cx="21" cy="7" r="6.500" fill="#e2131f"/></svg><i class="h-px w-[3px] bg-[#667]"></i></button>
  </div>
  <div class="flex items-center justify-end gap-[9px] pr-2 text-[6px] leading-[8px] text-[#222]">
    <button class="mr-px" aria-label="Hidden icons"><svg class="size-[6px] rotate-180"><use href="#down"/></svg></button>
    <svg class="size-2" viewBox="0 0 16 16"><path d="M2 12Q-1 5 5 3q7-2 9 4" fill="none" stroke="#555" stroke-width="2"/><circle cx="7" cy="8" r="2.500" fill="#555"/><circle cx="11.500" cy="11" r="4.500" fill="#c51f38"/></svg>
    <svg class="size-2" viewBox="0 0 16 16" fill="none" stroke="#444" stroke-width="1.500"><rect x="5.500" y="1" width="5" height="9" rx="2.500"/><path d="M3 7q0 5 5 5t5-5M8 12v4"/></svg>
    <span>ENG</span>
    <span class="flex gap-1"><svg class="size-2" viewBox="0 0 16 16" fill="none" stroke="#333" stroke-width="1.500"><path d="M10 2H1v10h12V8M5 15h5M7 12v3"/><rect x="11" y="2" width="4" height="5"/></svg><svg class="size-2" viewBox="0 0 16 16" fill="none" stroke="#333" stroke-width="1.500"><path d="M1 6h3l4-4v12l-4-4H1zM10 5q2 3 0 6M13 3q4 5 0 10"/></svg></span>
    <time class="text-right">4:13 AM<br>12/28/2025</time>
  </div>
</footer>
</body>
</html>
